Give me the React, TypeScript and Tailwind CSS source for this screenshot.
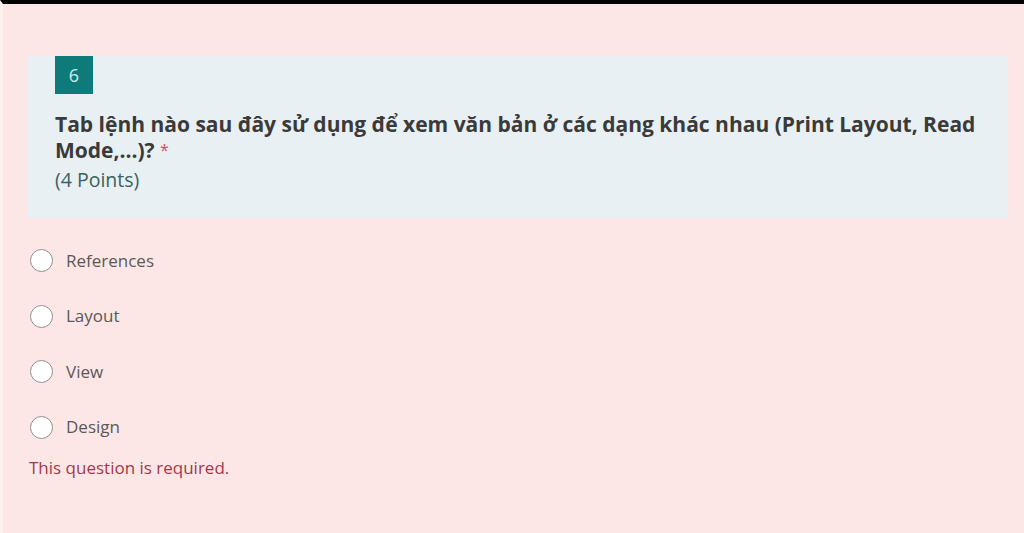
import React from "react";

const options = ["References", "Layout", "View", "Design"];

function Radio({ label }: { label: string }) {
    return (
        <div className="flex items-center h-[55.5px] pl-[27px]">
            <span className="w-[23px] h-[23px] rounded-full border-[1.5px] border-[#8f8d8b] bg-white shrink-0" />
            <span className="ml-[13px] text-[17px] leading-[24px] text-[#5a5857]">{label}</span>
        </div>
    );
}

export default function App() {
    return (
        <div
            className="w-[1024px] h-[533px] overflow-hidden bg-[#fde7e6] border-t-[4px] border-black border-l-[3px] border-l-[#fdf1f0] flex flex-col"
            style={{ fontFamily: '"Open Sans", "Noto Sans", sans-serif' }}
        >
            {/* question card */}
            <div className="mt-[52px] ml-[25px] mr-[16px] h-[162px] bg-[#e8f0f3] px-[27px] flex flex-col">
                <div className="w-[38px] h-[38px] bg-[#0f7a7a] text-[#cdeeee] flex items-center justify-center text-[18px]">6</div>
                <p className="mt-[17px] text-[21px] leading-[26px] font-bold text-[#3a3a3a]">
                    Tab lệnh nào sau đây sử dụng để xem văn bản ở các dạng khác nhau (Print Layout, Read Mode,...)? <span className="text-[16px] align-top text-[#c0565e] font-normal">*</span>
                </p>
                <p className="mt-[4px] text-[19.5px] leading-[26px] text-[#3b5f5f]">(4 Points)</p>
            </div>

            {/* answers */}
            <div className="mt-[15px] flex flex-col">
                {options.map((o) => (
                    <Radio key={o} label={o} />
                ))}
            </div>

            <p className="mt-[2px] pl-[26px] text-[17px] leading-[22px] text-[#a2384a]">This question is required.</p>
        </div>
    );
}
